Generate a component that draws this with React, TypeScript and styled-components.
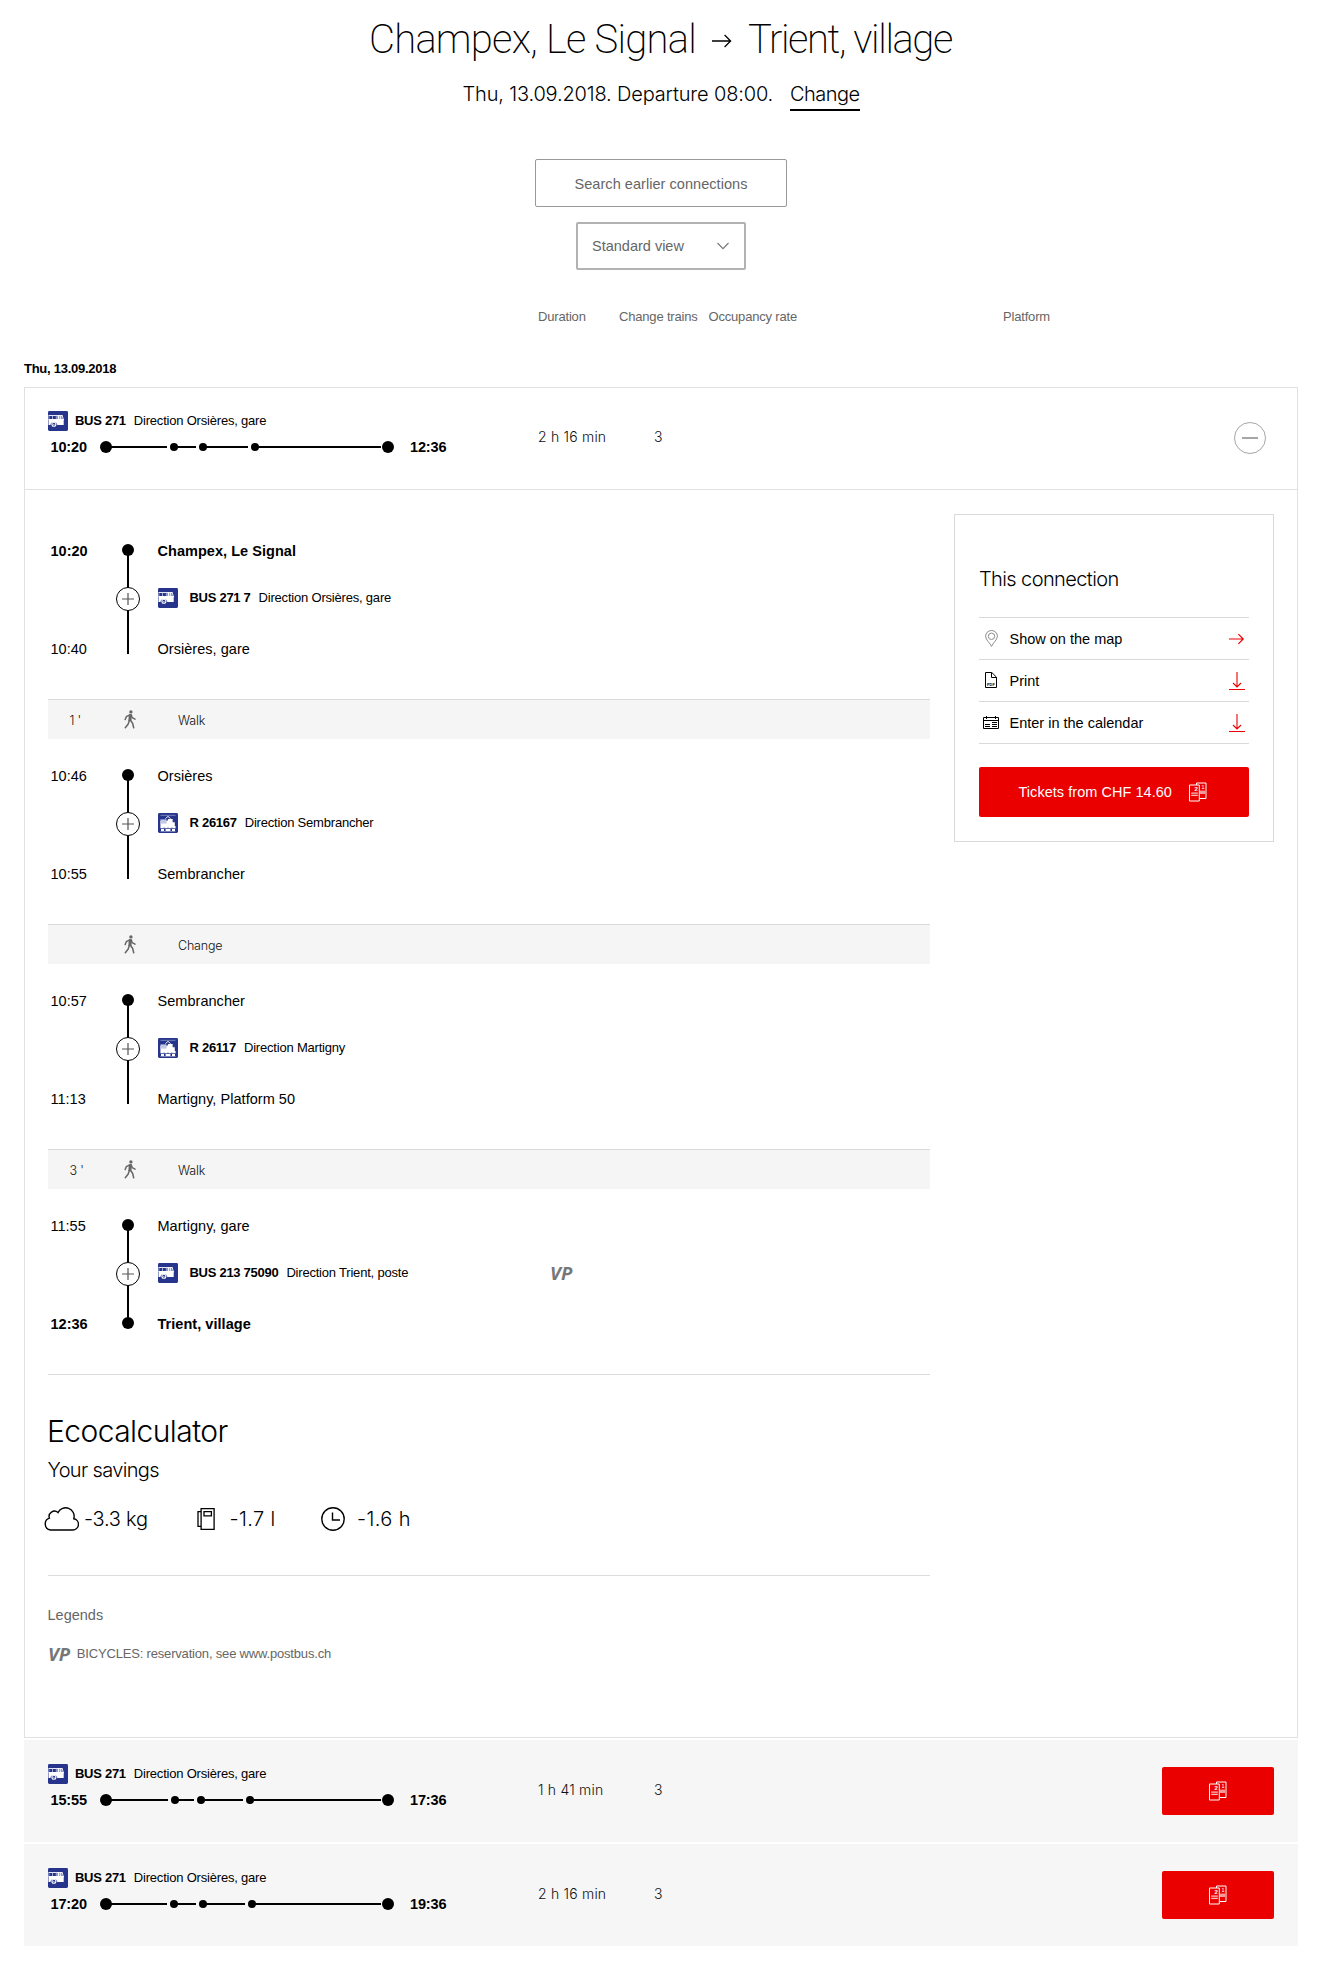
import React from 'react';
import styled, { createGlobalStyle } from 'styled-components';

const sans = '"Liberation Sans", Arial, sans-serif';
const light = 'Inter, "Liberation Sans", sans-serif';

const GlobalStyle = createGlobalStyle`
  *, *::before, *::after { box-sizing: border-box; }
  body { margin: 0; background: #fff; color: #000; font-family: ${sans}; }
  svg { display: block; flex: none; }
  button { font: inherit; cursor: pointer; }
`;

/* ---------- icons ---------- */

const BusIcon = () => (
  <svg width="20" height="20" viewBox="0 0 20 20">
    <rect width="20" height="20" rx="1.4" fill="#26348b" />
    <path d="M.5 4.500h14" stroke="#fff" strokeWidth=".9" />
    <path d="M.9 4.500v4.500M4.500 4.500v4.500M8.300 4.500v4.500" stroke="#c3c8e4" strokeWidth=".8" />
    <path d="M9 5h4.800l.9 3.800H9z" fill="#8f97c8" />
    <path d="M10.500 4.500v4.500M12.300 4.500v4.500M14.100 4.300l1.500 5" stroke="#fff" strokeWidth=".9" />
    <path d="M.5 8h15.200v5.900H9.300a3.500 3.500 0 0 0-6.900 0H.5z" fill="#fff" />
    <circle cx="5.900" cy="13.300" r="2" fill="none" stroke="#fff" strokeWidth="1.100" />
    <circle cx="5.900" cy="13.300" r=".6" fill="#fff" />
  </svg>
);

const TrainIcon = () => (
  <svg width="20" height="20" viewBox="0 0 20 20">
    <rect width="20" height="20" rx="1.4" fill="#26348b" />
    <path d="M2.500 2.300h15M2.500 18.500h15" stroke="#8f97c8" strokeWidth=".8" />
    <path d="M2.400 8h6.800l1-2h4.200l2.400 3.600V13H2.400z" fill="#fff" />
    <path d="M7.400 5.600 10 3.400l2.600 2.200" fill="none" stroke="#fff" strokeWidth=".9" />
    <path d="M2.400 6.400h6.200v4.200H2.400z" fill="#c3c8e4" />
    <path d="M14.600 6.800h1l.9 2.400h-1.900z" fill="#26348b" />
    <path d="M2.400 13h15.200v2.300H2.400z" fill="#fff" />
    <path d="M3 17h3M7.600 17h4.800M14 17h3" stroke="#fff" strokeWidth="1.800" />
    <path d="M6.200 14.300v1.400M10 14.300v1.400M13.800 14.300v1.400" stroke="#26348b" strokeWidth=".6" />
  </svg>
);

const WalkIcon = () => (
  <svg width="12" height="19" viewBox="0 0 12 19">
    <circle cx="6.9" cy="1.900" r="1.700" fill="#666" />
    <path
      d="M5.900 4.900 2.300 6.700 1.200 9.600M7.300 5 8.200 7.700 11 9.200M5.400 10.200 4.200 14 1.300 17.700M6.200 10 8.600 13.200 9.700 17.700"
      fill="none"
      stroke="#666"
      strokeWidth="1.500"
      strokeLinecap="round"
      strokeLinejoin="round"
    />
    <path d="M4.900 4.200h3l-.5 6.800H4.300z" fill="#666" />
  </svg>
);

const TitleArrow = () => (
  <svg width="20" height="14" viewBox="0 0 20 14" fill="none" stroke="#000" strokeWidth="1.300">
    <path d="M0 7h18.600M12.600 1l6 6-6 6" />
  </svg>
);

const Chevron = () => (
  <svg width="12" height="8" viewBox="0 0 12 8" fill="none" stroke="#767676" strokeWidth="1.100">
    <path d="M.5 1 6 6.600 11.500 1" />
  </svg>
);

const MinusIcon = () => (
  <svg width="32" height="32" viewBox="0 0 32 32" fill="none">
    <circle cx="16" cy="16" r="15.500" stroke="#a6a6a6" />
    <path d="M8 16h16" stroke="#a6a6a6" strokeWidth="2" />
  </svg>
);

const TicketIcon = () => (
  <svg width="18" height="20" viewBox="0 0 18 20">
    <path d="M7.500 3V1h9.500v15.500h-6" fill="none" stroke="#fff" />
    <path d="M.5 3h9.800v16H.5z" fill="none" stroke="#fff" />
    <path d="M11 8.600h5v3.400h-5z" fill="#fff" opacity=".6" />
    <path d="M2.200 11.200h6.600M2.200 13.400h6.600" stroke="#fff" strokeWidth="1.300" opacity=".75" />
    <text x="5.600" y="8.600" fill="#fff" fontSize="6" fontWeight="700" fontFamily="Liberation Sans, sans-serif">2</text>
    <text x="12.600" y="6.600" fill="#fff" fontSize="5.500" fontFamily="Liberation Sans, sans-serif">1</text>
  </svg>
);

const PinIcon = () => (
  <svg width="13" height="17" viewBox="0 0 13 17" fill="none" stroke="#808080" strokeWidth=".9">
    <path d="M6.500 16.400C5.600 13.400.6 10 .6 6.200a5.900 5.700 0 0 1 11.800 0c0 3.800-5 7.200-5.900 10.200z" />
    <circle cx="6.500" cy="6.300" r="3.200" />
  </svg>
);

const PdfIcon = () => (
  <svg width="12" height="16" viewBox="0 0 12 16">
    <path d="M.5.5h6.300l4.700 4.700v10.300H.5z M6.500.8v4.700h4.800" fill="none" stroke="#000" />
    <text x="2" y="13.600" fontSize="3.900" fontWeight="700" fontFamily="Liberation Sans, sans-serif">PDF</text>
  </svg>
);

const CalendarIcon = () => (
  <svg width="16" height="13" viewBox="0 0 16 13" fill="none" stroke="#000">
    <path d="M.5 1.500h15v11H.5zM.5 4.500h15M3.500 0v3M12.500 0v3" />
    <path d="M2 8.500h5M2 10.500h5M9 6.500h5M9 8.500h5M9 10.500h5" />
  </svg>
);

const RightArrow = () => (
  <svg width="16" height="12" viewBox="0 0 16 12" fill="none" stroke="#eb0000" strokeWidth="1.200">
    <path d="M0 6h14M9.400 1.200 14.200 6l-4.800 4.800" />
  </svg>
);

const DownloadArrow = () => (
  <svg width="16" height="18" viewBox="0 0 16 18" fill="none" stroke="#eb0000">
    <path d="M8 0v15M4 11l4 4 4-4" strokeWidth="1.100" />
    <path d="M0 17.500h16" />
  </svg>
);

const CloudIcon = () => (
  <svg width="35" height="24" viewBox="0 0 35 24" fill="none" stroke="#000" strokeWidth="1.400">
    <path d="M6.400 23h22.200a5.700 5.700 0 0 0 1.200-11.300A8.500 8.500 0 0 0 14 5.600a5.300 5.300 0 0 0-8.600 5.600A6.100 6.100 0 0 0 6.400 23z" />
  </svg>
);

const PumpIcon = () => (
  <svg width="18" height="24" viewBox="0 0 18 24" fill="none" stroke="#000" strokeWidth="1.300">
    <path d="M4.100 1.600h13v20.800h-13zM4.100 4.600H1v14.800h3.100M7 4.600h7.400v4.200H7z" />
  </svg>
);

const ClockIcon = () => (
  <svg width="24" height="24" viewBox="0 0 24 24" fill="none" stroke="#000" strokeWidth="1.400">
    <circle cx="12" cy="12" r="11.200" />
    <path d="M11.500 5.500V13H19" />
  </svg>
);

/* ---------- page head ---------- */

const Page = styled.main`
  width: 1274px;
  margin-left: 24px;
  padding-top: 16px;
`;

const Title = styled.h1`
  display: flex;
  justify-content: center;
  align-items: center;
  margin: 0 0 0 -1px;
  font: 200 40px/48px Roboto, ${sans};
`;

const Place = styled.span<{ $spacing: number }>`
  letter-spacing: ${(p) => p.$spacing}px;
  white-space: nowrap;
`;

const ArrowSlot = styled.span`
  padding: 1px 16px 0 16px;
`;

const Subtitle = styled.div`
  display: flex;
  justify-content: center;
  align-items: flex-start;
  gap: 17px;
  margin-top: 18px;
  font: 300 20px/24px ${light};
  letter-spacing: -0.16px;
`;

const ChangeLink = styled.a`
  padding-bottom: 3px;
  border-bottom: 2px solid #000;
  letter-spacing: -0.55px;
`;

const Controls = styled.div`
  display: flex;
  flex-direction: column;
  align-items: center;
  gap: 15px;
  margin-top: 48px;
`;

const EarlierButton = styled.button`
  width: 252px;
  height: 48px;
  padding: 2px 0 0;
  border: 1px solid #999;
  border-radius: 2px;
  background: #fff;
  color: #666;
  font-size: 14.5px;
  letter-spacing: 0.05px;
`;

const ViewSelect = styled.button`
  display: flex;
  justify-content: space-between;
  align-items: center;
  width: 170px;
  height: 48px;
  padding: 0 15px 0 14px;
  border: 2px solid #b2b2b2;
  border-radius: 2px;
  background: #fff;
  color: #666;
  font-size: 14.5px;
`;

const ColumnHeads = styled.div`
  display: grid;
  grid-template-columns: 81px 89.5px 294.5px 1fr;
  margin-top: 39px;
  padding-left: 514px;
  color: #666;
  font-size: 13px;
  line-height: 16px;
  letter-spacing: -0.18px;
`;

const DateHeading = styled.h2`
  margin: 36px 0 10px;
  font-size: 13px;
  line-height: 16px;
  letter-spacing: -0.26px;
`;

/* ---------- connection list ---------- */

const Connections = styled.section`
  display: flex;
  flex-direction: column;
  gap: 2px;
`;

const Connection = styled.article<{ $open?: boolean }>`
  background: ${(p) => (p.$open ? '#fff' : '#f6f6f6')};
  outline: ${(p) => (p.$open ? '1px solid #e1e1e1' : 'none')};
  outline-offset: -1px;
`;

const SummaryRow = styled.div<{ $open?: boolean }>`
  display: grid;
  grid-template-columns: 490px 116px 1fr auto;
  align-items: center;
  height: ${(p) => (p.$open ? 103 : 102)}px;
  padding: 0 ${(p) => (p.$open ? 32 : 24)}px 0 24px;
  border-bottom: ${(p) => (p.$open ? '1px solid #e1e1e1' : 'none')};
`;

const Journey = styled.div`
  align-self: start;
  padding-top: 24px;
`;

const Heading = styled.div`
  display: flex;
  align-items: center;
  font-size: 13px;
  line-height: 16px;
  letter-spacing: -0.2px;
  white-space: nowrap;
`;

const LineName = styled.strong<{ $gap: number }>`
  margin: 0 8px 0 ${(p) => p.$gap}px;
  letter-spacing: -0.28px;
`;

const TrackRow = styled.div`
  display: flex;
  align-items: center;
  margin-top: 8px;
  padding-left: 2px;
  font-size: 14.5px;
  font-weight: 700;
  line-height: 16px;
  letter-spacing: -0.15px;
`;

const StartTime = styled.time`
  width: 50px;
  padding-left: 0.5px;
`;

const EndTime = styled.time`
  margin-left: 16px;
`;

const Figure = styled.span`
  padding-bottom: 2px;
  color: #111;
  font: 300 14px/16px ${light};
  letter-spacing: 0.2px;
`;

const BuyButton = styled.button`
  display: flex;
  justify-content: center;
  align-items: center;
  width: 112px;
  height: 48px;
  padding: 0;
  border: 0;
  border-radius: 2px;
  background: #eb0000;
`;

/* ---------- details ---------- */

const Details = styled.div`
  display: flex;
  align-items: flex-start;
  gap: 24px;
  height: 1248px;
  padding: 24px;
`;

const Itinerary = styled.div`
  width: 882px;
`;

const Segment = styled.div`
  display: flex;
  height: 185px;
  padding: 27px 0 0 2px;
`;

const Times = styled.div`
  display: flex;
  flex-direction: column;
  justify-content: space-between;
  width: 66px;
  height: 118px;
  padding-left: 0.5px;
  font-size: 14.5px;
  line-height: 20px;
`;

const Time = styled.time<{ $bold?: boolean }>`
  font-weight: ${(p) => (p.$bold ? 700 : 400)};
`;

const Stops = styled.div`
  display: flex;
  flex-direction: column;
  margin-left: 17px;
`;

const Stop = styled.div<{ $bold?: boolean }>`
  padding-left: 0.5px;
  font-size: 14.5px;
  font-weight: ${(p) => (p.$bold ? 700 : 400)};
  line-height: 20px;
  letter-spacing: 0.04px;
`;

const Service = styled.div`
  display: grid;
  grid-template-columns: 392px auto;
  align-items: center;
  height: 20px;
  margin: 27px 0 31px 1px;
`;

const Vp = styled.span`
  color: #767676;
  font: italic 700 18.5px/20px "Noto Sans", ${sans};
`;

const Transfer = styled.div`
  display: grid;
  grid-template-columns: 76px 54px 1fr;
  align-items: center;
  height: 40px;
  border-top: 1px solid #d9d9d9;
  background: #f5f5f5;
  color: #111;
  font: 300 12.5px/16px ${light};
  letter-spacing: -0.2px;
`;

const Minutes = styled.span`
  padding: 2px 0 0 21.5px;
  white-space: pre;
`;

const TransferLabel = styled.span`
  padding-top: 2px;
`;

const Divider = styled.hr<{ $top?: number }>`
  height: 1px;
  margin: ${(p) => p.$top ?? 0}px 0 0;
  border: 0;
  background: #dcdcdc;
`;

const EcoTitle = styled.h2`
  margin: 38px 0 9px -1px;
  font: 300 30px/36px ${light};
  letter-spacing: -0.57px;
`;

const EcoSubtitle = styled.p`
  margin: 0 0 24px -0.5px;
  font: 300 20px/24px ${light};
  letter-spacing: -0.65px;
`;

const Savings = styled.div`
  display: grid;
  grid-template-columns: 153px 124px auto;
  margin-left: -4.5px;
`;

const Saving = styled.div<{ $gap: number; $spacing?: number }>`
  display: flex;
  align-items: center;
  gap: ${(p) => p.$gap}px;
  height: 25px;
  font: 300 20px/24px ${light};
  letter-spacing: ${(p) => p.$spacing ?? -0.25}px;
  white-space: nowrap;
`;

const LegendTitle = styled.h3`
  margin: 29px 0 19px -0.5px;
  color: #666;
  font-size: 14.5px;
  font-weight: 400;
  line-height: 20px;
`;

const Legend = styled.div`
  display: flex;
  align-items: center;
  gap: 7px;
  color: #666;
  font-size: 13px;
  line-height: 20px;
  letter-spacing: -0.18px;
`;

/* ---------- side panel ---------- */

const Panel = styled.aside`
  width: 320px;
  padding: 52px 24px 24px;
  border: 1px solid #d9d9d9;
`;

const PanelTitle = styled.h3`
  margin: 0 0 26px;
  font: 300 20px/24px ${light};
  letter-spacing: -0.6px;
`;

const Actions = styled.div`
  border-bottom: 1px solid #d9d9d9;
`;

const Action = styled.a`
  display: grid;
  grid-template-columns: 24px 1fr auto;
  align-items: center;
  column-gap: 6.5px;
  height: 42px;
  padding-right: 4px;
  border-top: 1px solid #d9d9d9;
  font-size: 14.5px;
`;

const ActionIcon = styled.span`
  display: flex;
  justify-content: center;
  padding-bottom: 1px;
`;

const ActionLabel = styled.span`
  padding-top: 1px;
`;

const TicketsButton = styled.button`
  display: flex;
  align-items: center;
  gap: 17px;
  width: 100%;
  height: 50px;
  margin-top: 23px;
  padding: 0 0 0 39.5px;
  border: 0;
  border-radius: 2px;
  background: #eb0000;
  color: #fff;
  font-size: 14.5px;
  letter-spacing: 0.04px;
`;

/* ---------- data ---------- */

type Leg = { dots: number[]; ends: number[] };

type TripProps = {
  start: string;
  end: string;
  duration: string;
  track: Leg;
};

const trips: Record<'first' | 'second' | 'third', TripProps> = {
  first: { start: '10:20', end: '12:36', duration: '2 h 16 min', track: { dots: [74, 103, 155], ends: [67, 96, 148] } },
  second: { start: '15:55', end: '17:36', duration: '1 h 41 min', track: { dots: [75, 101, 150], ends: [68, 94, 143] } },
  third: { start: '17:20', end: '19:36', duration: '2 h 16 min', track: { dots: [74, 103, 152], ends: [67, 96, 145] } },
};

const Track = ({ dots, ends }: Leg) => (
  <svg width="294" height="12" viewBox="0 0 294 12">
    {[...ends, 281].map((end, i) => {
      const from = i === 0 ? 6 : dots[i - 1];
      return <rect key={end} x={from} y="5" width={end - from} height="2" />;
    })}
    <circle cx="6" cy="6" r="6" />
    {dots.map((x) => (
      <circle key={x} cx={x} cy="6" r="4" />
    ))}
    <circle cx="288" cy="6" r="6" />
  </svg>
);

const Rail = ({ last }: { last?: boolean }) => (
  <svg width="24" height="118" viewBox="0 0 24 118">
    <rect x="11" y="9" width="2" height={last ? 98 : 104} />
    <circle cx="12" cy="9" r="6" />
    {last && <circle cx="12" cy="107" r="6" />}
    <circle cx="12" cy="58" r="11.500" fill="#fff" stroke="#000" />
    <path d="M6 58h12M12 52v12" stroke="#555" strokeWidth="1.200" />
  </svg>
);

const Summary = ({ start, end, duration, track, open }: TripProps & { open?: boolean }) => (
  <SummaryRow $open={open}>
    <Journey>
      <Heading>
        <BusIcon />
        <LineName $gap={7}>BUS 271</LineName>
        Direction Orsières, gare
      </Heading>
      <TrackRow>
        <StartTime>{start}</StartTime>
        <Track {...track} />
        <EndTime>{end}</EndTime>
      </TrackRow>
    </Journey>
    <Figure>{duration}</Figure>
    <Figure>3</Figure>
    {open ? (
      <MinusIcon />
    ) : (
      <BuyButton>
        <TicketIcon />
      </BuyButton>
    )}
  </SummaryRow>
);

type RideProps = {
  times: [string, string];
  stops: [string, string];
  line: string;
  direction: string;
  kind: 'bus' | 'train';
  first?: boolean;
  last?: boolean;
};

const Ride = ({ times, stops, line, direction, kind, first, last }: RideProps) => (
  <Segment>
    <Times>
      <Time $bold={first}>{times[0]}</Time>
      <Time $bold={last}>{times[1]}</Time>
    </Times>
    <Rail last={last} />
    <Stops>
      <Stop $bold={first}>{stops[0]}</Stop>
      <Service>
        <Heading>
          {kind === 'bus' ? <BusIcon /> : <TrainIcon />}
          <LineName $gap={11.5}>{line}</LineName>
          {direction}
        </Heading>
        {last && <Vp>VP</Vp>}
      </Service>
      <Stop $bold={last}>{stops[1]}</Stop>
    </Stops>
  </Segment>
);

const Walk = ({ minutes, label }: { minutes?: string; label: string }) => (
  <Transfer>
    <Minutes>{minutes}</Minutes>
    <WalkIcon />
    <TransferLabel>{label}</TransferLabel>
  </Transfer>
);

export default function App() {
  return (
    <>
      <GlobalStyle />
      <Page>
        <Title>
          <Place $spacing={-0.75}>Champex, Le Signal</Place>
          <ArrowSlot>
            <TitleArrow />
          </ArrowSlot>
          <Place $spacing={-1.4}>Trient, village</Place>
        </Title>
        <Subtitle>
          <span>Thu, 13.09.2018. Departure 08:00.</span>
          <ChangeLink>Change</ChangeLink>
        </Subtitle>
        <Controls>
          <EarlierButton>Search earlier connections</EarlierButton>
          <ViewSelect>
            Standard view
            <Chevron />
          </ViewSelect>
        </Controls>
        <ColumnHeads>
          <span>Duration</span>
          <span>Change trains</span>
          <span>Occupancy rate</span>
          <span>Platform</span>
        </ColumnHeads>
        <DateHeading>Thu, 13.09.2018</DateHeading>
        <Connections>
          <Connection $open>
            <Summary {...trips.first} open />
            <Details>
              <Itinerary>
                <Ride first kind="bus" times={['10:20', '10:40']} stops={['Champex, Le Signal', 'Orsières, gare']} line="BUS 271 7" direction="Direction Orsières, gare" />
                <Walk minutes="1 '" label="Walk" />
                <Ride kind="train" times={['10:46', '10:55']} stops={['Orsières', 'Sembrancher']} line="R 26167" direction="Direction Sembrancher" />
                <Walk label="Change" />
                <Ride kind="train" times={['10:57', '11:13']} stops={['Sembrancher', 'Martigny, Platform 50']} line="R 26117" direction="Direction Martigny" />
                <Walk minutes="3 '" label="Walk" />
                <Ride last kind="bus" times={['11:55', '12:36']} stops={['Martigny, gare', 'Trient, village']} line="BUS 213 75090" direction="Direction Trient, poste" />
                <Divider />
                <EcoTitle>Ecocalculator</EcoTitle>
                <EcoSubtitle>Your savings</EcoSubtitle>
                <Savings>
                  <Saving $gap={5.5}>
                    <CloudIcon />
                    -3.3 kg
                  </Saving>
                  <Saving $gap={15} $spacing={0.4}>
                    <PumpIcon />
                    -1.7 l
                  </Saving>
                  <Saving $gap={12.5} $spacing={0.4}>
                    <ClockIcon />
                    -1.6 h
                  </Saving>
                </Savings>
                <Divider $top={44} />
                <LegendTitle>Legends</LegendTitle>
                <Legend>
                  <Vp>VP</Vp>
                  BICYCLES: reservation, see www.postbus.ch
                </Legend>
              </Itinerary>
              <Panel>
                <PanelTitle>This connection</PanelTitle>
                <Actions>
                  <Action>
                    <ActionIcon>
                      <PinIcon />
                    </ActionIcon>
                    <ActionLabel>Show on the map</ActionLabel>
                    <RightArrow />
                  </Action>
                  <Action>
                    <ActionIcon>
                      <PdfIcon />
                    </ActionIcon>
                    <ActionLabel>Print</ActionLabel>
                    <DownloadArrow />
                  </Action>
                  <Action>
                    <ActionIcon>
                      <CalendarIcon />
                    </ActionIcon>
                    <ActionLabel>Enter in the calendar</ActionLabel>
                    <DownloadArrow />
                  </Action>
                </Actions>
                <TicketsButton>
                  Tickets from CHF 14.60
                  <TicketIcon />
                </TicketsButton>
              </Panel>
            </Details>
          </Connection>
          <Connection>
            <Summary {...trips.second} />
          </Connection>
          <Connection>
            <Summary {...trips.third} />
          </Connection>
        </Connections>
      </Page>
    </>
  );
}
